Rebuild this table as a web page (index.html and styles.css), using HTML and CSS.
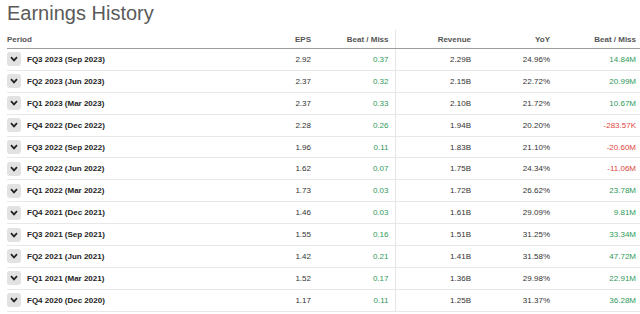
FILE: index.html
```html
<!DOCTYPE html>
<html lang="en">
<head>
  <meta charset="UTF-8">
  <title>Earnings History</title>
  <link rel="stylesheet" href="styles.css">
</head>
<body>
  <!-- Заголовок -->
  <h2 class="title">Earnings History</h2>

  <!-- Таблица отчётов -->
  <table class="earnings">
    <colgroup>
      <col class="c-period">
      <col class="c-eps">
      <col class="c-beat">
      <col class="c-rev">
      <col class="c-yoy">
      <col class="c-beat2">
    </colgroup>
    <thead>
      <tr>
        <th class="left">Period</th>
        <th>EPS</th>
        <th class="split">Beat / Miss</th>
        <th>Revenue</th>
        <th>YoY</th>
        <th>Beat / Miss</th>
      </tr>
    </thead>
    <tbody id="rows"></tbody>
  </table>

  <script>
    // Данные по кварталам
    const data = [
      ["FQ3 2023 (Sep 2023)", "2.92", "0.37", "2.29B", "24.96%", "14.84M"],
      ["FQ2 2023 (Jun 2023)", "2.37", "0.32", "2.15B", "22.72%", "20.99M"],
      ["FQ1 2023 (Mar 2023)", "2.37", "0.33", "2.10B", "21.72%", "10.67M"],
      ["FQ4 2022 (Dec 2022)", "2.28", "0.26", "1.94B", "20.20%", "-283.57K"],
      ["FQ3 2022 (Sep 2022)", "1.96", "0.11", "1.83B", "21.10%", "-20.60M"],
      ["FQ2 2022 (Jun 2022)", "1.62", "0.07", "1.75B", "24.34%", "-11.06M"],
      ["FQ1 2022 (Mar 2022)", "1.73", "0.03", "1.72B", "26.62%", "23.78M"],
      ["FQ4 2021 (Dec 2021)", "1.46", "0.03", "1.61B", "29.09%", "9.81M"],
      ["FQ3 2021 (Sep 2021)", "1.55", "0.16", "1.51B", "31.25%", "33.34M"],
      ["FQ2 2021 (Jun 2021)", "1.42", "0.21", "1.41B", "31.58%", "47.72M"],
      ["FQ1 2021 (Mar 2021)", "1.52", "0.17", "1.36B", "29.98%", "22.91M"],
      ["FQ4 2020 (Dec 2020)", "1.17", "0.11", "1.25B", "31.37%", "36.28M"]
    ];

    const chevron = '<svg width="8" height="6" viewBox="0 0 8 6"><path d="M1 1.2 L4 4.4 L7 1.2" fill="none" stroke="#222" stroke-width="1.7"/></svg>';

    function cls(v) {
      return v.startsWith("-") ? "neg" : "pos";
    }

    const tbody = document.getElementById("rows");
    data.forEach(r => {
      const tr = document.createElement("tr");
      tr.innerHTML =
        '<td class="left"><span class="period"><span class="toggle">' + chevron + '</span>' + r[0] + '</span></td>' +
        '<td>' + r[1] + '</td>' +
        '<td class="split ' + cls(r[2]) + '">' + r[2] + '</td>' +
        '<td>' + r[3] + '</td>' +
        '<td>' + r[4] + '</td>' +
        '<td class="' + cls(r[5]) + '">' + r[5] + '</td>';
      tbody.appendChild(tr);
    });
  </script>
</body>
</html>
```

FILE: styles.css
```css
/* Основные стили */
body {
  font-family: "Liberation Sans", Arial, sans-serif;
  margin: 0;
  padding: 0 0 0 7px;
  background: #fff;
  color: #333;
  overflow: hidden;
}

.title {
  font-size: 20px;
  font-weight: normal;
  line-height: 23px;
  color: #5a5a5a;
  margin: 2px 0 5px;
}

/* Таблица */
.earnings {
  border-collapse: collapse;
  table-layout: fixed;
  width: 635px;
  font-size: 8px;
}

.c-period { width: 230px; }
.c-eps { width: 80px; }
.c-beat { width: 78px; }
.c-rev { width: 82px; }
.c-yoy { width: 79px; }
.c-beat2 { width: 86px; }

.earnings th {
  font-weight: bold;
  color: #555;
  text-align: right;
  padding: 0 6px 0 0;
  height: 18px;
  border-bottom: 1px solid #9c9c9c;
}

.earnings td {
  text-align: right;
  padding: 0 6px 0 0;
  height: 20.9px;
  border-bottom: 1px solid #e8e8e8;
  color: #333;
}

.earnings .left {
  text-align: left;
  padding: 0;
}

.earnings .split {
  border-right: 1px solid #e6e6e6;
}

.earnings td.pos { color: #2f9a5a; }
.earnings td.neg { color: #e0463c; }

.period {
  display: flex;
  align-items: center;
  gap: 6px;
  font-weight: bold;
  color: #222;
}

.toggle {
  width: 14px;
  height: 14px;
  border-radius: 3px;
  background: #e2e2e2;
  display: flex;
  align-items: center;
  justify-content: center;
}
```
